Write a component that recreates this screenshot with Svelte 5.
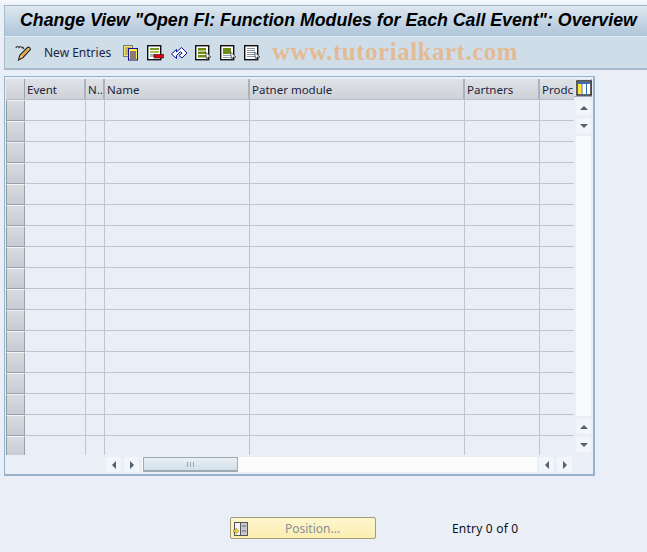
<script>
  const columns = [
    { label: 'Event', width: 61 },
    { label: 'N..', width: 19 },
    { label: 'Name', width: 145 },
    { label: 'Patner module', width: 215 },
    { label: 'Partners', width: 75 },
    { label: 'Prodc', width: 34 }
  ]
  const rows = Array.from({ length: 17 })
</script>

<div class="page">
  <div class="title-bar">
    <h1>Change View "Open FI: Function Modules for Each Call Event": Overview</h1>
  </div>

  <div class="toolbar">
    <svg class="icon pencil" width="17" height="16" viewBox="0 0 17 16">
      <path d="M1 3 C1 1 3 1 4 3 C4 1 6 1 7 3 C7 2 8 2 9 4" fill="none" stroke="#333" stroke-width="1.100"/>
      <path d="M3.500 15 L5 10 L12.500 2.500 C14 1.500 16 3.500 15 5 L8 12.500 Z" fill="#fbe6a8" stroke="#222" stroke-width="1.200"/>
      <path d="M6 10.500 L13 3.500 L14 4.500 L7.500 11.500 Z" fill="#ee9c2a"/>
      <path d="M3.500 15 L4.500 12 L6.500 14 Z" fill="#a8401f"/>
    </svg>
    <span class="new-entries">New Entries</span>

    <svg class="icon copy" width="16" height="16" viewBox="0 0 16 16">
      <rect x="0.500" y="0.500" width="9" height="11" fill="#f5e27a" stroke="#777"/>
      <path d="M2 3h6M2 5h3M2 7h3M2 9h3" stroke="#998a30"/>
      <rect x="5.500" y="3.500" width="9" height="11.500" fill="#ffe94f" stroke="#10109a"/>
      <path d="M7 7h6M7 9h6M7 11h6M7 13h6" stroke="#10109a"/>
    </svg>
    <svg class="icon delete" width="17" height="16" viewBox="0 0 17 16">
      <rect x="0.700" y="0.700" width="13" height="14" fill="#fff" stroke="#111" stroke-width="1.400"/>
      <rect x="3" y="3" width="9" height="2" fill="#7e9a2a"/>
      <rect x="3" y="6" width="9" height="2" fill="#a9c05a"/>
      <rect x="3" y="9" width="5" height="3" fill="#9fb4c4"/>
      <rect x="7" y="9.500" width="9.500" height="3.500" fill="#e8000f" stroke="#111" stroke-width=".6"/>
    </svg>
    <svg class="icon undo" width="17" height="16" viewBox="0 0 17 16">
      <path d="M0.500 9 L5.500 4.500 V7 L10.500 2.500 L16 8 L11 13 L8 10.500 L11 8 L9.500 6.500 L5.500 10.500 V13.500 Z" fill="#fff" stroke="#10109a"/>
    </svg>
    <svg class="icon pick wide" width="17" height="16" viewBox="0 0 17 16">
      <rect x="0.700" y="0.700" width="13" height="14" fill="#fff" stroke="#111" stroke-width="1.400"/>
      <path d="M3 3h8v2.500H3zM3 6.500h8V9H3zM3 10h8v2.500H3z" fill="#6f8a12"/>
      <path d="M10.500 7 L16 12 H13 L12 15.500 Z" fill="#fff" stroke="#333" stroke-width=".7"/>
    </svg>
    <svg class="icon pick" width="17" height="16" viewBox="0 0 17 16">
      <rect x="0.700" y="0.700" width="13" height="14" fill="#fff" stroke="#111" stroke-width="1.400"/>
      <rect x="3" y="3" width="8" height="6" fill="#6f8a12"/>
      <path d="M3 10.500h8M3 12.500h8" stroke="#8aa3b8"/>
      <path d="M10.500 7 L16 12 H13 L12 15.500 Z" fill="#fff" stroke="#333" stroke-width=".7"/>
    </svg>
    <svg class="icon pick" width="17" height="16" viewBox="0 0 17 16">
      <rect x="0.700" y="0.700" width="13" height="14" fill="#fff" stroke="#111" stroke-width="1.400"/>
      <path d="M3 3.500h8M3 5.500h8M3 7.500h8M3 9.500h8M3 11.500h8" stroke="#8796a4"/>
      <path d="M10.500 7 L16 12 H13 L12 15.500 Z" fill="#fff" stroke="#333" stroke-width=".7"/>
    </svg>

    <span class="watermark">www.tutorialkart.com</span>
  </div>

  <div class="table-box">
    <div class="table-top">
      <div class="grid">
        <div class="row head">
          <div class="corner"></div>
          {#each columns as col}
            <div class="th" style="width: {col.width}px">{col.label}</div>
          {/each}
        </div>
        {#each rows as _}
          <div class="row">
            <div class="selector"></div>
            {#each columns as col}
              <div class="td" style="width: {col.width}px"></div>
            {/each}
          </div>
        {/each}
      </div>

      <div class="v-scroll">
        <div class="settings">
          <svg width="16" height="16" viewBox="0 0 16 16">
            <rect x="1" y="1" width="14" height="14" fill="#fff" stroke="#111" stroke-width="1.300"/>
            <rect x="2" y="2" width="12" height="2" fill="#3a6fb5"/>
            <rect x="2" y="4" width="3.500" height="10" fill="#ffe23a"/>
            <path d="M6 4V15M10.500 4V15" stroke="#3a6fb5"/>
          </svg>
        </div>
        <div class="sbtn"><span class="up"></span></div>
        <div class="sbtn"><span class="down"></span></div>
        <div class="track"></div>
        <div class="sbtn"><span class="up"></span></div>
        <div class="sbtn"><span class="down"></span></div>
      </div>
    </div>

    <div class="h-scroll">
      <div class="sbtn"><span class="left"></span></div>
      <div class="sbtn"><span class="right"></span></div>
      <div class="h-track">
        <div class="thumb"><span class="grip"></span></div>
      </div>
      <div class="sbtn"><span class="left"></span></div>
      <div class="sbtn"><span class="right"></span></div>
    </div>
  </div>

  <div class="footer">
    <button class="position">
      <svg width="15" height="15" viewBox="0 0 15 15">
        <rect x="1.500" y="1.500" width="13" height="13" fill="#c4c6d4" stroke="#555"/>
        <rect x="1.500" y="1.500" width="6" height="13" fill="#f2f3f8" stroke="#555"/>
        <path d="M9 5h4M9 10h4" stroke="#666"/>
        <path d="M0 9h3V7l3 3-3 3v-2H0z" fill="#f2d84a" stroke="#8a7a20" stroke-width=".5"/>
      </svg>
      <span>Position...</span>
    </button>
    <span class="entry">Entry 0 of 0</span>
  </div>
</div>

<style>
  :global(body) {
    margin: 0;
    background: #eaeff7;
  }

  .page {
    width: 647px;
    height: 552px;
    padding-top: 5px;
    box-sizing: border-box;
    overflow: hidden;
    background: linear-gradient(#f6f8fb, #eaeff7 6px);
    font-family: "Noto Sans", "Liberation Sans", sans-serif;
    font-size: 12px;
    color: #1a1a2a;
  }

  .title-bar {
    margin-left: 4px;
    height: 31px;
    box-sizing: border-box;
    display: flex;
    align-items: center;
    padding: 0 0 2px 15px;
    border-top: 1px solid #9fb6cc;
    border-left: 1px solid #a9bccd;
    background: linear-gradient(#dde7f0, #aec5da);
  }

  h1 {
    margin: 0;
    font-family: "Liberation Sans", sans-serif;
    font-size: 17.75px;
    font-weight: bold;
    font-style: italic;
    color: #000;
    white-space: nowrap;
  }

  .toolbar {
    position: relative;
    margin-left: 4px;
    height: 34px;
    box-sizing: border-box;
    display: flex;
    align-items: center;
    padding-left: 10px;
    border-left: 1px solid #a9bccd;
    border-top: 1px solid #e4ebf2;
    border-bottom: 2px solid #a9b9c9;
    background: #cfdde9;
  }

  .icon {
    flex: none;
    margin-right: 7px;
  }

  .copy, .wide {
    margin-right: 8px;
  }

  .new-entries {
    margin-left: 5px;
    margin-right: 12px;
    color: #1c2540;
  }

  .watermark {
    position: absolute;
    left: 267px;
    top: 1px;
    font-family: "Liberation Serif", serif;
    font-size: 25px;
    font-weight: bold;
    letter-spacing: 0.5px;
    color: rgba(240, 165, 90, 0.6);
    white-space: nowrap;
  }

  .table-box {
    margin: 6px 0 0 4px;
    width: 591px;
    height: 400px;
    box-sizing: border-box;
    padding: 2px 0 0 1px;
    border: 1px solid #98b2cb;
    border-width: 1px 2px 2px 1px;
    background: #eaeff7;
  }

  .table-top {
    display: flex;
    height: 376px;
  }

  .grid {
    width: 568px;
    height: 376px;
    overflow: hidden;
  }

  .row {
    display: flex;
    height: 21px;
    box-sizing: border-box;
  }

  .head {
    background: linear-gradient(#dfe2e6, #ced2d7);
    border-bottom: 1px solid #b6bec8;
  }

  .corner {
    width: 19px;
    flex: none;
    box-sizing: border-box;
    border-right: 1px solid #9aa3ad;
  }

  .selector {
    width: 19px;
    flex: none;
    box-sizing: border-box;
    background: linear-gradient(#d8dce1, #c8ccd2);
    border: 1px solid #98a2ac;
    border-top-color: #f0f3f6;
    border-left-color: #8e98a2;
  }

  .th {
    flex: none;
    box-sizing: border-box;
    padding-left: 2px;
    font-size: 11.5px;
    line-height: 21px;
    border-right: 2px solid #aab2bc;
    color: #1c2540;
    white-space: nowrap;
    overflow: hidden;
  }

  .th:last-child {
    border-right: none;
  }

  .td {
    flex: none;
    box-sizing: border-box;
    border-right: 1px solid #bcc6d2;
    border-bottom: 1px solid #bcc6d2;
  }

  .td:last-child {
    border-right: none;
  }

  .v-scroll {
    width: 15px;
    height: 373px;
    margin-left: 2px;
    display: flex;
    flex-direction: column;
    align-items: flex-start;
    gap: 3px;
  }

  .settings {
    width: 18px;
    height: 18px;
    margin-left: -2px;
    box-sizing: border-box;
    padding: 1px 0 0 2px;
    border-right: 1px solid #a0a8b2;
    border-bottom: 1px solid #a0a8b2;
    background: #dfe3e8;
    flex: none;
  }

  .settings svg {
    display: block;
  }

  .sbtn {
    width: 15px;
    height: 15px;
    flex: none;
    background: #f2f5f9;
    display: flex;
    align-items: center;
    justify-content: center;
  }

  .up, .down, .left, .right {
    width: 0;
    height: 0;
    border: 4px solid transparent;
  }

  .up {
    border-top: none;
    border-bottom: 4px solid #4f6072;
  }

  .down {
    border-bottom: none;
    border-top: 4px solid #4f6072;
  }

  .left {
    border-left: none;
    border-right: 4px solid #4f6072;
  }

  .right {
    border-right: none;
    border-left: 4px solid #4f6072;
  }

  .track {
    flex: 1;
    width: 15px;
    background: #f9fafc;
  }

  .h-scroll {
    display: flex;
    align-items: center;
    gap: 3px;
    height: 15px;
    margin-top: 2px;
    padding-left: 100px;
  }

  .h-track {
    width: 395px;
    height: 15px;
    margin-right: -1px;
    background: #fcfcfd;
  }

  .thumb {
    width: 95px;
    height: 15px;
    margin-left: 1px;
    box-sizing: border-box;
    border: 1px solid #9eaab5;
    border-bottom-width: 2px;
    background: linear-gradient(#eaf0f5, #d3dfe8);
    display: flex;
    align-items: center;
    justify-content: center;
  }

  .grip {
    width: 8px;
    height: 5px;
    background: repeating-linear-gradient(90deg, #9aa6b2 0 1px, transparent 1px 3px);
  }

  .footer {
    margin-top: 41px;
    height: 22px;
    display: flex;
    align-items: center;
    padding-left: 230px;
  }

  .position {
    width: 146px;
    height: 22px;
    padding: 0 0 0 2px;
    box-sizing: border-box;
    display: flex;
    align-items: center;
    border: 1px solid #a39c78;
    border-radius: 2px;
    background: linear-gradient(#fdf6cf, #fbeeb0);
    font: inherit;
    color: #8a8f99;
  }

  .position span {
    margin-left: 37px;
  }

  .entry {
    margin-left: 76px;
    letter-spacing: 0.2px;
    color: #10101a;
  }
</style>
